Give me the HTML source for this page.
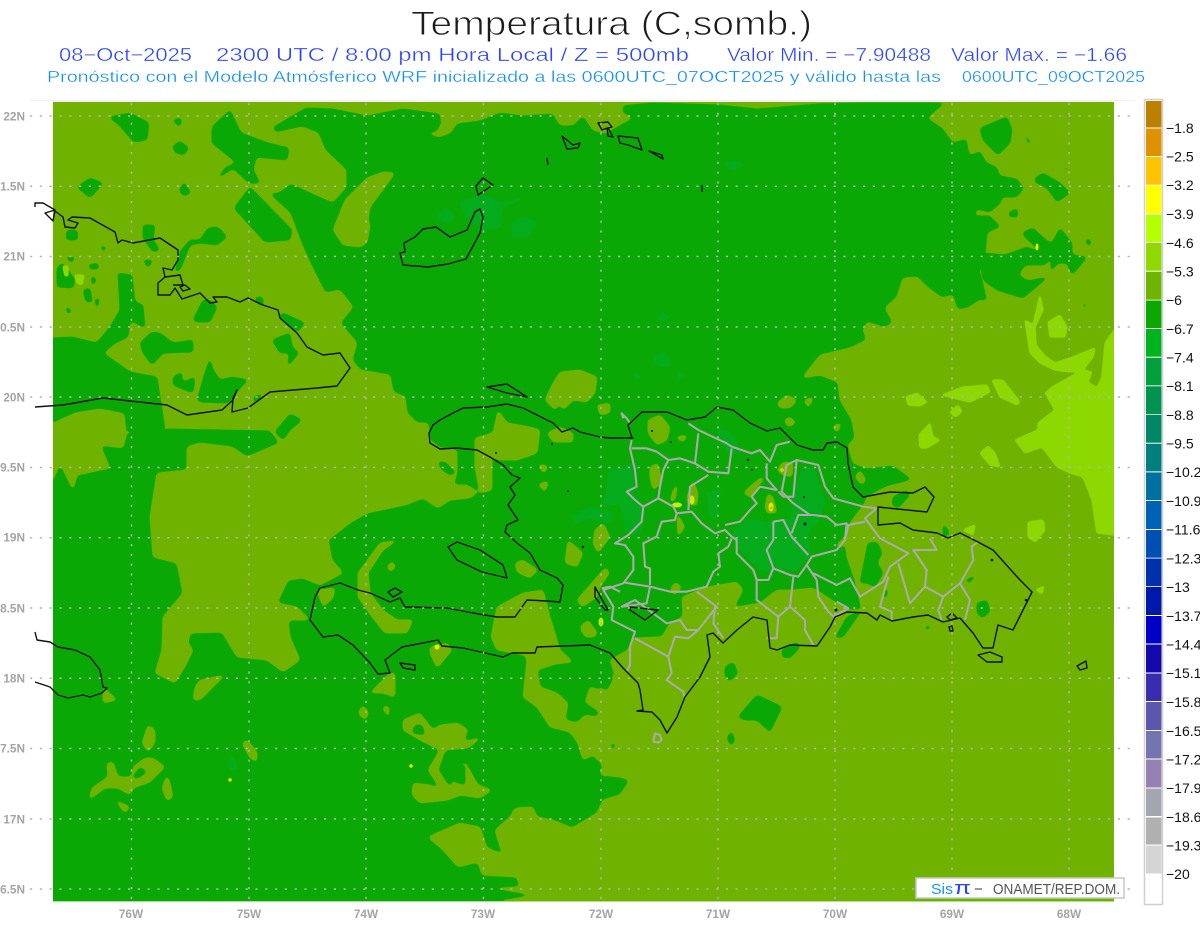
<!DOCTYPE html>
<html><head><meta charset="utf-8"><style>
html,body{margin:0;padding:0;background:#fff;width:1200px;height:927px;overflow:hidden}
svg{display:block}
text{font-family:"Liberation Sans",sans-serif}
.o polygon{fill:#6FB300;stroke:#6FB300;stroke-width:1;stroke-linejoin:round}
.d polygon{fill:#0AA805;stroke:#0AA805;stroke-width:1;stroke-linejoin:round}
.m polygon{fill:#04AC1C;stroke:#04AC1C;stroke-width:1;stroke-linejoin:round}
.l polygon{fill:#8CD800;stroke:#8CD800;stroke-width:1;stroke-linejoin:round}
.c polygon,.c polyline{fill:none;stroke:#111;stroke-width:1.4;stroke-linejoin:round}
.p polyline,.p polygon{fill:none;stroke:#ababab;stroke-width:6.2;stroke-linejoin:round}
.ax{fill:#a4a4a4;font-size:11.8px;font-weight:bold}
.cb{fill:#111;font-size:14px}
</style></head><body>
<svg width="1200" height="927" viewBox="0 0 1200 927" xmlns="http://www.w3.org/2000/svg">
<defs>
<clipPath id="mp"><rect x="53" y="102" width="1061" height="799"/></clipPath>
<filter id="gs" filterUnits="userSpaceOnUse" x="0" y="70" width="1200" height="857" color-interpolation-filters="sRGB">
<feGaussianBlur stdDeviation="2.2"/>
<feColorMatrix type="matrix" values="1 0 0 0 0 0 1 0 0 0 0 0 1 0 0 0 0 0 9 -4"/>
</filter>
<filter id="gt" filterUnits="userSpaceOnUse" x="0" y="70" width="1200" height="857" color-interpolation-filters="sRGB">
<feGaussianBlur stdDeviation="1.4"/>
<feColorMatrix type="matrix" values="1 0 0 0 0 0 1 0 0 0 0 0 1 0 0 0 0 0 8 -3"/>
</filter>
</defs>
<rect width="1200" height="927" fill="#fff"/>
<text x="411" y="35" font-size="34" fill="#1c1c1c" stroke="#fff" stroke-width=".9" textLength="401" lengthAdjust="spacingAndGlyphs">Temperatura (C,somb.)</text>
<g font-size="18.5" fill="#2a44ff" stroke="#fff" stroke-width=".35">
<text x="59" y="61" textLength="133" lengthAdjust="spacingAndGlyphs">08−Oct−2025</text>
<text x="216" y="61" textLength="473" lengthAdjust="spacingAndGlyphs">2300 UTC / 8:00 pm Hora Local / Z = 500mb</text>
<text x="727" y="61" textLength="204" lengthAdjust="spacingAndGlyphs">Valor Min. = −7.90488</text>
<text x="951" y="61" textLength="176" lengthAdjust="spacingAndGlyphs">Valor Max. = −1.66</text>
</g>
<g font-size="16" fill="#0f8dff" stroke="#fff" stroke-width=".3">
<text x="47" y="82" textLength="894" lengthAdjust="spacingAndGlyphs">Pronóstico con el Modelo Atmósferico WRF inicializado a las 0600UTC_07OCT2025 y válido hasta las</text>
<text x="962" y="82" textLength="183" lengthAdjust="spacingAndGlyphs">0600UTC_09OCT2025</text>
</g>

<rect x="30" y="100" width="1105" height="1" fill="#f0f0f0"/>
<rect x="53" y="102" width="1061" height="799" fill="#0AA805"/>
<rect x="53" y="901" width="1061" height="1" fill="#a8e08c"/>

<g clip-path="url(#mp)">
<g class="o" filter="url(#gs)">
<polygon points="40,85 1135,85 1135,102 40,102"/>
<polygon points="40,85 53,85 53,480 40,480"/>
<polygon points="1114,85 1135,85 1135,920 1114,920"/>
<polygon points="500,901 1135,901 1135,920 537,920"/>
<polygon points="947,102 928,118 943,128 953,142 967,138 970,155 980,150 987,162 998,167 1000,175 1017,178 1025,188 1017,198 1002,198 1002,203 990,213 977,210 975,215 990,215 1002,227 988,233 985,265 980,270 983,280 988,302 980,300 968,308 957,310 953,295 942,298 927,287 917,277 903,278 897,297 885,308 893,322 885,328 867,322 863,330 867,340 850,348 820,355 802,378 820,375 838,382 840,400 852,420 855,438 848,445 853,463 867,468 893,465 907,475 913,480 886,487 867,497 865,503 850,523 845,538 847,557 855,580 862,610 847,610 827,597 813,588 793,590 777,590 760,603 737,607 728,622 735,605 743,590 737,582 707,587 682,597 683,617 670,623 662,637 633,638 628,650 610,660 615,675 600,690 590,687 585,702 600,712 597,717 585,715 577,723 565,720 568,703 557,693 540,687 537,670 555,664 573,662 560,650 557,640 550,617 543,590 523,593 497,607 491,637 497,650 525,655 527,660 523,697 537,707 550,727 570,732 578,743 583,760 593,755 603,765 600,775 620,777 630,780 620,795 603,800 597,813 572,828 553,820 537,817 533,807 515,808 510,817 495,830 500,847 505,855 487,848 480,827 460,823 428,837 443,850 458,867 478,862 482,875 517,877 520,887 490,888 537,895 500,901 1114,901 1114,102"/>
<polygon points="53,102 652,102 622,105 622,113 632,118 605,133 593,130 583,115 573,125 560,125 553,113 523,115 500,112 480,120 457,123 450,133 438,137 428,133 437,132 442,123 440,113 403,108 367,115 333,108 306,107 272,127 275,133 302,127 318,133 325,150 346,170 346,187 333,202 310,192 291,183 279,192 268,193 290,213 302,245 312,267 325,293 340,290 353,307 340,323 357,343 352,360 360,370 390,375 393,392 405,397 407,413 417,423 428,423 430,440 440,448 457,450 457,473 453,485 467,485 478,492 470,498 450,500 438,508 423,498 405,505 367,513 350,523 328,540 332,560 343,573 320,585 303,578 288,580 277,603 297,607 310,620 288,620 290,637 300,660 283,672 267,660 237,657 222,632 190,633 188,643 193,650 187,663 175,683 155,673 162,650 163,617 183,593 177,563 153,557 150,517 157,473 187,470 187,447 200,443 232,447 247,457 280,443 270,430 170,428 127,432 123,448 100,445 110,468 77,475 73,490 60,463 53,480"/>
<polygon points="652,102 720,104 757,108 817,103 860,102"/>
<polygon points="395,173 383,172 367,178 345,200 333,230 343,245 360,247 367,243 370,225 368,220 370,207 385,187"/>
<polygon points="475,438 493,433 498,410 507,423 530,427 540,430 537,453 517,460 500,460 492,457 492,490 480,493 475,467"/>
<polygon points="545,400 553,383 560,372 580,370 597,377 595,393 587,402 573,400 563,410 560,403 555,410"/>
<polygon points="597,405 610,403 610,413 600,415"/>
<polygon points="547,433 560,427 573,433 573,442 553,442"/>
<polygon points="538,464 548,466 544,474"/><polygon points="538,484 549,481 545,492"/>
<polygon points="648,420 660,415 670,427 667,440 657,445 648,433"/>
<polygon points="777,403 787,395 797,400 790,408 780,408"/>
<polygon points="784,420 790,417 796,423 788,427"/>
<polygon points="804,400 814,397 808,408"/><polygon points="832,427 841,422 838,433"/>
<polygon points="675,437 688,435 683,442"/>
<polygon points="855,477 860,470 866,480 862,485"/>
<polygon points="650,467 658,463 662,483 653,490 650,477"/>
<polygon points="673,490 678,483 675,500 670,503"/><polygon points="677,513 685,527 678,537"/>
<polygon points="595,530 603,523 610,537 598,553 593,543"/>
<polygon points="568,540 583,553 577,567 565,563"/>
<polygon points="577,600 605,568 610,572 600,587 597,597 582,607"/>
<polygon points="580,627 588,620 597,632 595,637 585,637"/>
<polygon points="670,590 675,582 682,587 675,595"/>
<polygon points="743,493 760,478 765,478 757,487 752,498"/>
<polygon points="777,470 783,462 793,463 792,477 783,475"/>
<polygon points="836,546 844,537 842,548"/>
<polygon points="765,507 768,493 773,497 777,513 767,513"/>
<polygon points="687,497 693,480 698,493 697,505 688,505"/>
<polygon points="195,687 200,680 225,675 217,683 200,700 193,700"/>
<polygon points="142,743 148,725 155,730 155,743 148,752"/>
<polygon points="242,743 247,740 257,752 257,762 250,758"/>
<polygon points="89,800 92,788 108,777 107,763 113,762 118,777 132,777 133,767 145,758 153,758 165,767 150,782 133,788 130,795 118,788 105,788"/>
<polygon points="167,775 170,783 173,797 167,801 162,788"/>
<polygon points="115,800 130,807 125,813"/>
<polygon points="103,687 117,700 103,703"/>
<polygon points="358,713 363,705 369,713 365,720"/><polygon points="382,707 389,706 389,718"/>
<polygon points="370,693 390,673 395,673 395,697 383,693"/>
<polygon points="403,720 420,713 433,730 440,725 458,723 468,730 463,742 482,737 468,748 445,750 438,770 450,788 465,762 478,785 492,790 480,798 460,795 448,800 420,803 412,795 413,783 430,785 441,790 428,770 440,750 420,740 403,730"/>
<polygon points="358,573 380,543 398,540 383,550 368,573 370,593 383,610 397,620 413,620 407,633 385,633 372,617 358,597"/>
<polygon points="387,567 392,561 396,567 390,572"/>
<polygon points="317,590 335,588 333,598 323,607"/>
<polygon points="430,647 447,643 452,650 437,668 430,653"/>
<polygon points="515,563 523,560 538,570 530,578 517,572"/>
</g>

<g class="d" filter="url(#gs)">
<polygon points="40,338 53,338 53,422 40,422"/>
<polygon points="53,338 72,337 97,343 110,327 120,310 118,273 132,275 135,302 143,305 145,328 130,320 128,337 115,343 103,353 130,372 157,377 160,397 165,430 127,432 125,413 100,408 75,412 53,422"/>
<polygon points="275,432 290,414 302,420 290,430 283,440"/>
<polygon points="77,187 90,178 103,183 90,198"/>
<polygon points="109,117 130,113 149,123 147,140 134,142 119,125"/>
<polygon points="172,120 182,118 180,127"/>
<polygon points="172,147 180,141 189,148 184,155 176,153"/>
<polygon points="179,191 184,182 191,193 184,196"/>
<polygon points="212,127 230,110 241,133 268,143 289,148 287,160 256,157 253,170 260,183 249,183 233,168 216,180 226,167 237,163 212,143"/>
<polygon points="234,208 250,187 292,230 290,240 265,242"/>
<polygon points="143,225 155,225 153,240 160,250 153,252 143,238"/>
<polygon points="175,272 180,252 190,240 200,240 208,228 218,227 227,237 217,245 200,243 190,245 180,270"/>
<polygon points="143,260 153,260 148,268"/>
<polygon points="57,267 63,263 75,280 73,288 57,287"/>
<polygon points="65,257 75,257 72,263"/>
<polygon points="88,265 98,263 99,269 90,269"/>
<polygon points="83,290 90,288 92,302 86,302"/>
<polygon points="91,275 97,280 92,286"/>
<polygon points="95,300 100,297 97,311"/>
<polygon points="66,305 72,312 67,314"/>
<polygon points="67,230 77,230 78,240 66,240"/>
<polygon points="100,245 107,248 103,252"/>
<polygon points="152,332 160,333 173,343 193,340 193,352 163,353 152,365 143,353 140,343"/>
<polygon points="193,320 203,300 210,300 217,307 210,322 197,322"/>
<polygon points="255,297 263,297 263,307 257,303"/>
<polygon points="278,317 283,313 305,323 297,332"/>
<polygon points="272,340 290,333 292,347 299,353 287,367 290,353 280,353"/>
<polygon points="197,400 205,373 210,358 213,370 220,380 233,377 248,380 240,388 233,398 227,403 200,402"/>
<polygon points="173,377 182,372 182,383 195,377 193,393 173,385"/>
<polygon points="252,398 263,393 257,403"/>
<polygon points="356,363 361,356 361,369"/>
<polygon points="438,462 445,462 456,473 450,475 442,470"/>
<polygon points="860,583 868,543 877,542 882,553 877,563 883,573 875,587 867,583"/>
<polygon points="882,592 888,588 886,600"/>
<polygon points="862,610 843,637 835,638 847,617"/>
<polygon points="893,497 907,490 910,495 898,508 892,505"/>
<polygon points="943,523 950,533 943,538"/>
<polygon points="966,580 978,574 968,584"/>
<polygon points="977,603 987,600 990,612 982,618 977,613"/>
<polygon points="924,627 931,625 928,631"/>
<polygon points="782,650 797,642 800,647 790,658 782,657"/>
<polygon points="725,667 733,662 738,673 730,681 725,677"/>
<polygon points="738,717 757,695 782,707 770,732 757,720 745,720"/>
<polygon points="727,738 731,731 735,740 731,746"/>
<circle cx="613" cy="746" r="3" fill="#0AA805"/>
<polygon points="600,687 610,675 613,678 607,690"/>
<polygon points="980,128 1007,117 1012,130 1010,143 998,155 983,140"/>
<polygon points="1024,133 1033,145 1027,142"/>
<polygon points="1063,167 1069,168 1067,172"/>
<polygon points="1035,178 1043,173 1060,183 1070,193 1057,202 1047,188 1035,182"/>
<polygon points="1008,213 1017,208 1018,217 1010,217"/>
<polygon points="1022,233 1033,228 1038,233 1050,243 1052,255 1040,250 1028,240"/>
<polygon points="1052,243 1060,228 1072,243 1072,255 1087,257 1078,268 1072,275 1067,263 1058,263 1050,272 1052,260 1048,256"/>
<polygon points="985,253 1005,255 1027,247 1050,258 1045,265 1025,265 1018,275 1028,281 1048,277 1023,298 997,290 983,280 980,260"/>
<polygon points="1085,237 1092,242 1088,247"/>
<polygon points="1082,302 1087,305 1084,309"/>
<polygon points="415,725 422,725 425,735 412,733"/>
<polygon points="448,765 465,765 465,785 450,780"/>
<polygon points="132,778 140,767 147,772 138,778"/>
</g>

<g class="m" filter="url(#gt)">
<polygon points="733,533 747,520 770,522 780,523 792,517 793,493 802,470 813,468 820,487 825,503 818,520 807,533 810,557 795,570 773,570 762,570 750,560 737,547"/>
<polygon points="610,470 637,463 632,490 643,510 640,533 627,533 620,503 603,507"/>
<polygon points="572,517 590,507 613,513 610,523 590,518 577,523"/>
<polygon points="717,430 730,432 740,450 730,457"/>
<polygon points="707,493 720,490 717,520 710,513"/>
<polygon points="460,203 483,195 503,203 523,198 503,207 500,227 483,230 467,217"/>
<polygon points="438,217 445,207 455,217 448,223"/>
<polygon points="512,223 523,217 537,223 527,237 513,237"/>
<polygon points="725,163 737,161 743,165 733,170"/>
<polygon points="653,357 662,352 670,360 668,367 658,365"/>
<polygon points="657,317 663,313 669,318 662,322"/>
<polygon points="677,372 684,375 680,379"/><polygon points="634,372 641,376 636,379"/>
<polygon points="228,762 233,757 237,768 230,770"/>
</g>

<g class="l" filter="url(#gt)">
<polygon points="1135,330 1114,330 1105,343 1102,377 1097,388 1088,382 1092,372 1083,370 1070,377 1052,387 1045,393 1055,410 1038,423 1038,430 1015,440 1025,453 1042,447 1057,467 1070,473 1083,477 1092,500 1097,533 1114,535 1135,535"/>
<polygon points="1033,325 1040,295 1043,310 1035,327 1036,345 1045,356 1055,363 1070,358 1095,348 1093,357 1083,370 1070,372 1055,370 1040,363 1030,353 1025,320"/>
<polygon points="1048,322 1060,315 1067,327 1065,337 1050,337"/>
<polygon points="942,395 963,387 987,385 990,392 970,402 953,398"/>
<polygon points="992,380 1003,380 1020,402 1017,405 1000,397"/>
<polygon points="906,397 917,393 927,402 920,406 908,405"/>
<polygon points="950,412 958,405 962,412 955,417"/>
<polygon points="919,435 930,423 933,437 940,440 927,448 920,448"/>
<polygon points="980,453 988,446 995,453 1000,467 990,465"/>
<polygon points="1028,522 1043,520 1045,530 1035,542 1028,537"/>
<polygon points="963,530 975,525 973,535"/>
<polygon points="1036,590 1044,586 1042,594"/>
<polygon points="75,275 84,275 82,285 77,283"/>
<polygon points="63,266 68,266 68,276 65,276"/>
</g>
</g>

<g>
<ellipse cx="677" cy="505" rx="5" ry="2.5" fill="#c8f000"/>
<ellipse cx="692" cy="500" rx="2.5" ry="4.500" fill="#c8f000"/>
<ellipse cx="771" cy="507" rx="2.5" ry="4.500" fill="#d8f000"/>
<circle cx="771" cy="508" r="1.3" fill="#ff9000"/>
<ellipse cx="601" cy="622" rx="2.5" ry="4.500" fill="#b8f000"/>
<ellipse cx="1037" cy="247" rx="1.5" ry="3.500" fill="#e8f800"/>
<ellipse cx="437" cy="647" rx="2.5" ry="2.5" fill="#e0f000"/>
<circle cx="230" cy="780" r="1.7" fill="#e0f000"/>
<circle cx="411" cy="766" r="1.7" fill="#e0f000"/>
<circle cx="782" cy="470" r="1.8" fill="#c8e000"/>
</g>

<g fill="#111">
<circle cx="652" cy="431" r="1"/><circle cx="671" cy="442" r="1"/><circle cx="748" cy="460" r="1.2"/><circle cx="752" cy="470" r="1"/><circle cx="804" cy="497" r="1"/><circle cx="805" cy="524" r="1.5"/><circle cx="992" cy="560" r="1.3"/><circle cx="1026" cy="600" r="1.3"/><circle cx="836" cy="610" r="1.5"/><circle cx="583" cy="547" r="1.2"/><circle cx="568" cy="491" r="1"/><circle cx="552" cy="444" r="1"/><circle cx="496" cy="453" r="1"/>
</g>

<g class="p" transform="translate(560 390) scale(.33333)">
<polyline points="215,150 210,175 225,240 230,290 200,305 225,330 250,350 245,395 205,435 165,460 195,465 220,500 220,540 190,580 130,600 160,650 155,690 225,725 210,770 210,825 200,845"/>
<polyline points="385,100 415,120 500,160 515,170 575,190 600,180 630,215 650,165 690,155"/>
<polyline points="215,175 260,175 290,185 325,210 360,205 405,220 415,130"/>
<polyline points="325,210 310,240 300,290 295,325 340,350 350,370 395,365 425,400 465,430 495,420 515,440 530,450 530,490 580,540 590,570 625,570 640,535 690,555 715,560 740,525 755,500 830,480 855,450 860,400 830,405 800,380 760,375 715,375 695,430"/>
<polyline points="405,220 445,245 505,250 515,175"/>
<polyline points="445,255 390,290 385,360"/>
<polyline points="495,405 540,395 570,360 590,340 575,320 600,290 650,300 620,265 620,220"/>
<polyline points="640,395 670,390 695,440 745,495"/>
<polyline points="640,395 640,450 620,480 635,520 640,535"/>
<polyline points="295,325 250,350"/>
<polyline points="350,370 345,390 305,395 290,440 250,460 255,530 270,535 270,585"/>
<polyline points="515,445 505,470 475,490 480,530 460,545 440,590 380,605 330,605 270,590 195,578"/>
<polyline points="270,590 260,640 185,650 225,630 320,700 360,690 380,720 415,720 470,650 410,605"/>
<polyline points="465,650 460,700 490,745"/>
<polyline points="225,745 325,800 345,740 385,745 415,720"/>
<polyline points="325,800 335,850 320,870 370,905 375,925"/>
<polyline points="590,570 590,630 655,680 650,745 620,745"/>
<polyline points="700,560 690,650 655,680"/>
<polyline points="690,650 735,690 735,720 760,765"/>
<polyline points="740,525 770,570 775,620 805,665 820,680 865,655 830,635"/>
<polyline points="760,550 830,585 870,565 900,620 970,575 990,530 1045,490 960,445 915,385 950,355 910,350 820,325 795,290 775,225 710,210 700,320 670,320 655,305"/>
<polyline points="915,395 865,405 855,450"/>
<polyline points="1015,520 1050,640 1095,590 1100,540 1060,480 1130,480 1110,445"/>
<polyline points="985,560 960,650 995,665 995,690"/>
<polyline points="1095,590 1150,620 1135,660 1145,690"/>
<polyline points="1150,620 1200,580 1230,630 1215,690"/>
<polyline points="1200,580 1240,510 1235,470 1255,455"/>
<polyline points="700,340 665,305 680,225 710,210"/>
<polyline points="700,340 750,375"/>
<polyline points="125,595 150,590 180,605"/>
<polyline points="210,100 200,85 185,70 190,85"/>
<polygon points="285,1030 300,1035 305,1050 295,1058 280,1055"/>
</g>

<g class="c">
<polygon points="633,438 622,438 610,438 600,437 580,432 573,428 562,432 553,423 533,413 523,408 507,404 487,407 463,408 453,413 440,420 433,425 429,433 430,443 440,449 457,448 477,450 490,457 503,465 512,475 520,478 510,487 515,495 508,505 518,520 507,525 505,532 517,543 530,553 540,570 557,578 563,585 560,602 547,601 527,600 515,617 497,617 473,613 447,608 405,607 400,598 390,602 370,593 358,590 340,583 320,588 315,597 310,620 323,637 338,635 353,645 370,663 378,674 390,673 385,660 402,647 423,643 438,640 442,646 463,648 503,657 512,653 535,653 537,647 590,645 610,653 623,668 638,683 640,690 643,710 637,711 652,712 660,720 667,733 677,717 685,697 700,677 710,657 707,635 713,633 723,643 737,630 753,617 767,620 770,648 777,650 790,645 817,646 830,627 835,617 847,612 867,613 877,620 880,615 892,621 913,617 928,615 943,622 960,618 973,633 983,648 993,648 998,625 1013,630 1022,612 1032,592 1020,580 993,550 978,542 960,533 948,538 937,533 913,530 900,523 878,525 878,507 927,512 934,497 925,487 913,493 890,492 863,497 853,487 848,463 847,448 837,442 827,443 823,450 813,450 797,445 780,428 767,431 750,423 733,410 717,407 705,417 687,420 667,412 642,412 628,425 632,438"/>
<polygon points="978,655 990,652 1002,657 1002,662 987,662"/>
<polygon points="448,547 457,542 480,550 503,565 507,578 482,572 457,560"/>
<polygon points="487,387 507,384 527,397 507,393"/>
<polygon points="400,663 415,665 415,670 403,668"/>
<polygon points="388,592 395,588 402,592 393,597"/>
<polygon points="595,587 608,610 605,610 595,597"/>
<polygon points="630,607 658,610 645,620 630,610"/>
<polygon points="947,617 952,613 957,618 950,620"/>
<polygon points="949,627 952,626 953,631 950,631"/>
<polyline points="35,207 35,203 43,203 55,210 45,213 53,221 55,211 63,217 65,227 75,228 78,223 68,220 72,217 90,218 115,232 118,243 122,240 133,243 160,238 178,250 178,260 172,270 163,268 165,277 158,283 158,295 170,295 175,288 182,299 200,293 210,303 217,302 213,297 227,297 240,302 248,298 263,305 278,310 280,318 297,333 307,347 323,355 340,353 350,368 337,386 317,388 270,392 248,408 240,410 232,412 233,398 237,390 233,400 222,410 187,415 167,405 103,398 63,405 35,407"/>
<polyline points="165,277 180,275 183,285 173,285"/>
<polygon points="180,287 185,285 190,289 183,291"/>
<polygon points="562,136 573,145 580,143 578,148 567,149"/>
<polygon points="598,123 608,122 612,127 608,128 613,137 608,136 607,128 602,130"/>
<polygon points="618,136 638,138 642,150 628,145 620,143"/>
<polygon points="649,151 662,155 663,159"/>
<polyline points="547,158 548,165"/><polyline points="702,185 702,192"/>
<polygon points="476,186 483,178 493,185 478,195"/>
<polygon points="400,253 405,252 404,243 415,237 423,229 436,227 450,237 467,230 475,212 480,209 483,217 480,233 466,259 448,264 428,267 403,265"/>
<polyline points="35,632 37,640 50,642 58,647 75,650 90,657 100,670 103,687 107,688 102,693 90,697 83,695 68,698 58,695 50,687 35,682"/>
<polygon points="1077,666 1086,661 1087,668 1080,670"/>
</g>

<g stroke="#b4b4b4" stroke-width="1.5" stroke-dasharray="2.2 7.6" fill="none">
<path d="M30 116H1135M30 186.300H1135M30 256.500H1135M30 327H1135M30 397H1135M30 467.500H1135M30 537.700H1135M30 608H1135M30 678.300H1135M30 748.500H1135M30 819H1135M30 889H1135"/>
<path d="M131.500 103V906M249 103V906M366 103V906M483.500 103V906M601 103V906M718 103V906M835 103V906M952 103V906M1069 103V906"/>
</g>

<g class="ax" text-anchor="end">
<text x="25" y="120.500">22N</text><text x="25" y="190.500">1.5N</text><text x="25" y="260.500">21N</text><text x="25" y="331.500">0.5N</text><text x="25" y="401.500">20N</text><text x="25" y="471.500">9.5N</text><text x="25" y="541.500">19N</text><text x="25" y="612.500">8.5N</text><text x="25" y="682.500">18N</text><text x="25" y="752.500">7.5N</text><text x="25" y="823.500">17N</text><text x="25" y="893.500">6.5N</text>
</g>
<g class="ax" text-anchor="middle">
<text x="131" y="918">76W</text><text x="249" y="918">75W</text><text x="366" y="918">74W</text><text x="483" y="918">73W</text><text x="601" y="918">72W</text><text x="718" y="918">71W</text><text x="835" y="918">70W</text><text x="952" y="918">69W</text><text x="1069" y="918">68W</text>
</g>

<rect x="916" y="878" width="208" height="20" fill="#fff" stroke="#c8c8c8" stroke-width="1.5"/>
<text x="931" y="894" font-size="15" fill="#1893ff" textLength="22" lengthAdjust="spacingAndGlyphs">Sis</text>
<text x="954" y="894" font-size="18" fill="#2a40ff" font-family="DejaVu Sans" textLength="17" lengthAdjust="spacingAndGlyphs">π</text>
<text x="974" y="894" font-size="15" fill="#444">−</text>
<text x="993" y="894" font-size="15" fill="#555" textLength="127" lengthAdjust="spacingAndGlyphs">ONAMET/REP.DOM.</text>

<rect x="1144.500" y="99.500" width="18" height="805" fill="#fff" stroke="#d0d0d0" stroke-width="1.5"/>
<g>
<rect x="1146" y="101" width="15.500" height="26.500" fill="#BD7F00"/>
<rect x="1146" y="128.500" width="15.500" height="27.500" fill="#DD9300"/>
<rect x="1146" y="157" width="15.500" height="27.700" fill="#FFC300"/>
<rect x="1146" y="185.500" width="15.500" height="28" fill="#FFFF00"/>
<rect x="1146" y="214.500" width="15.500" height="27.500" fill="#B4FF00"/>
<rect x="1146" y="243" width="15.500" height="27.700" fill="#8FD800"/>
<rect x="1146" y="271.700" width="15.500" height="28" fill="#6FB400"/>
<rect x="1146" y="300.500" width="15.500" height="27.500" fill="#0AA800"/>
<rect x="1146" y="329" width="15.500" height="27.700" fill="#00B41E"/>
<rect x="1146" y="357.700" width="15.500" height="27.700" fill="#00A03C"/>
<rect x="1146" y="386.300" width="15.500" height="28" fill="#009350"/>
<rect x="1146" y="415" width="15.500" height="27.700" fill="#008864"/>
<rect x="1146" y="443.700" width="15.500" height="27.700" fill="#007F7F"/>
<rect x="1146" y="472.400" width="15.500" height="27.700" fill="#00709F"/>
<rect x="1146" y="501" width="15.500" height="28" fill="#0062B5"/>
<rect x="1146" y="530" width="15.500" height="27.700" fill="#0050B4"/>
<rect x="1146" y="558.500" width="15.500" height="27.700" fill="#0030AC"/>
<rect x="1146" y="587" width="15.500" height="28" fill="#0018AA"/>
<rect x="1146" y="616" width="15.500" height="27.500" fill="#0000C8"/>
<rect x="1146" y="644.500" width="15.500" height="28" fill="#1208AC"/>
<rect x="1146" y="673.500" width="15.500" height="27.500" fill="#3A2CAE"/>
<rect x="1146" y="702" width="15.500" height="28" fill="#5C56AE"/>
<rect x="1146" y="731" width="15.500" height="27.500" fill="#7474B0"/>
<rect x="1146" y="759.500" width="15.500" height="28" fill="#9480B2"/>
<rect x="1146" y="788.500" width="15.500" height="27.500" fill="#A5A5B0"/>
<rect x="1146" y="817.500" width="15.500" height="27" fill="#B0B0B0"/>
<rect x="1146" y="845.500" width="15.500" height="28" fill="#D5D5D5"/>
<rect x="1146" y="873.500" width="15.500" height="29.500" fill="#FFFFFF"/>
</g>
<g class="cb">
<text x="1166" y="133">−1.8</text><text x="1166" y="161.500">−2.5</text><text x="1166" y="190">−3.2</text><text x="1166" y="219">−3.9</text><text x="1166" y="248">−4.6</text><text x="1166" y="276.500">−5.3</text><text x="1166" y="305">−6</text><text x="1166" y="334">−6.7</text><text x="1166" y="362.500">−7.4</text><text x="1166" y="391">−8.1</text><text x="1166" y="420">−8.8</text><text x="1166" y="448.500">−9.5</text><text x="1166" y="477">−10.2</text><text x="1166" y="506">−10.9</text><text x="1166" y="534.500">−11.6</text><text x="1166" y="563.500">−12.3</text><text x="1166" y="592">−13</text><text x="1166" y="621">−13.7</text><text x="1166" y="649.500">−14.4</text><text x="1166" y="678">−15.1</text><text x="1166" y="707">−15.8</text><text x="1166" y="736">−16.5</text><text x="1166" y="764.500">−17.2</text><text x="1166" y="793">−17.9</text><text x="1166" y="822">−18.6</text><text x="1166" y="850.500">−19.3</text><text x="1166" y="879">−20</text>
</g>
</svg>
</body></html>
